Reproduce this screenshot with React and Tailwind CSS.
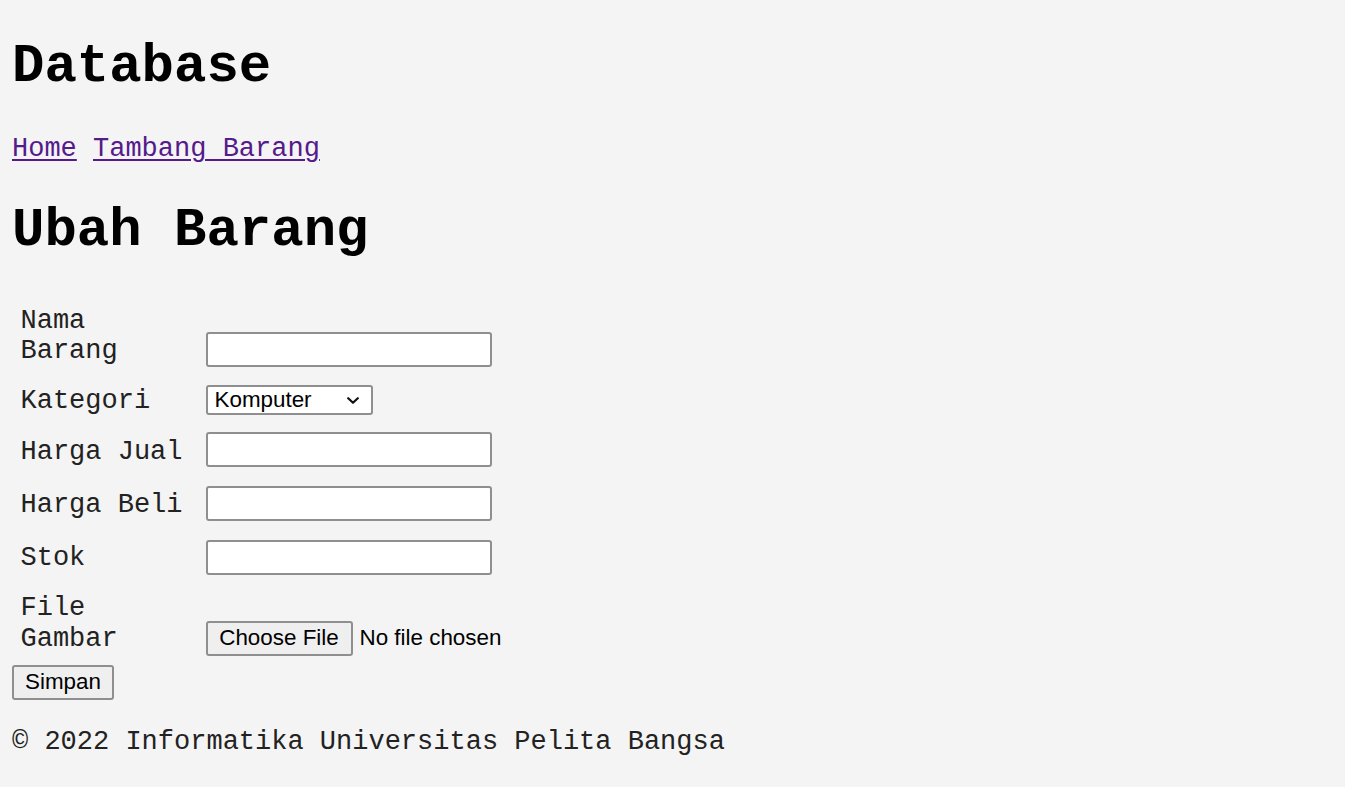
import { useState } from 'react';

// mt / pb are tuned so each row lands where the original page put it
const fields = [
  { name: 'nama', label: 'Nama Barang', type: 'text', row: 'mt-[44.8px]', pad: 'pb-0' },
  { name: 'kategori', label: 'Kategori', type: 'select', row: 'mt-[18.1px]', pad: '' },
  { name: 'harga_jual', label: 'Harga Jual', type: 'text', row: 'mt-[16.3px]', pad: 'pb-0' },
  { name: 'harga_beli', label: 'Harga Beli', type: 'text', row: 'mt-[18.8px]', pad: 'pb-[0.5px]' },
  { name: 'stok', label: 'Stok', type: 'text', row: 'mt-[18.3px]', pad: 'pb-[0.5px]' },
  { name: 'gambar', label: 'File Gambar', type: 'file', row: 'mt-[18.4px]', pad: 'pb-[1.8px]' },
];

function Field({ field, value, onChange }) {
  if (field.type === 'select') {
    return (
      <span className="relative block mb-[1.1px]">
        <select
          value={value}
          onChange={(e) => onChange(e.target.value)}
          className="appearance-none block w-[167px] h-[30px] pl-[7px] pr-[30px] border-2 border-[#8f8f8f] rounded-[3px] bg-white text-black font-['Liberation_Sans',Arial,sans-serif] text-[22.4px] leading-[26px]"
        >
          <option>Komputer</option>
          <option>Elektronik</option>
          <option>Hand Phone</option>
        </select>
        <svg className="pointer-events-none absolute right-[14px] top-[12px] w-[12px] h-[7px]" viewBox="0 0 12 7" fill="none">
          <path d="M1.2 1.2l4.8 4.6 4.8-4.6" stroke="#111" strokeWidth="2.2" strokeLinecap="round" strokeLinejoin="round" />
        </svg>
      </span>
    );
  }
  if (field.type === 'file') {
    return (
      <label className="flex items-center font-['Liberation_Sans',Arial,sans-serif] text-[22.4px] leading-[26px] text-black cursor-pointer">
        <span className="flex items-center justify-center h-[35px] w-[147px] border-2 border-[#8f8f8f] rounded-[3px] bg-[#efefef]">Choose File</span>
        <span className="ml-[7px]">No file chosen</span>
        <input type="file" className="hidden" />
      </label>
    );
  }
  return (
    <input
      type="text"
      value={value}
      onChange={(e) => onChange(e.target.value)}
      className="block w-[286px] h-[35px] px-[3px] border-2 border-[#8f8f8f] rounded-[3px] bg-white text-black font-['Liberation_Sans',Arial,sans-serif] text-[22.4px]"
    />
  );
}

export default function App() {
  const [form, setForm] = useState({ nama: '', kategori: 'Komputer', harga_jual: '', harga_beli: '', stok: '' });

  return (
    <div className="min-h-screen flex flex-col px-[12px] bg-[#f4f4f4] text-[#222] font-['Liberation_Mono','Courier_New',monospace] text-[27px] leading-[30.6px]">
      <h1 className="mt-[35.7px] text-[54px] leading-[61.2px] font-bold text-black">Database</h1>

      <nav className="mt-[37px]">
        <a href="#" className="text-[#551a8b] underline decoration-2 underline-offset-[3px]">Home</a>{' '}
        <a href="#" className="text-[#551a8b] underline decoration-2 underline-offset-[3px]">Tambang Barang</a>
      </nav>

      <h1 className="mt-[35.3px] text-[54px] leading-[61.2px] font-bold text-black">Ubah Barang</h1>

      <form className="flex flex-col" onSubmit={(e) => e.preventDefault()}>
        {fields.map((f) => (
          <div key={f.name} className={`flex items-end ${f.row}`}>
            <span className={`w-[193.5px] shrink-0 pl-[8.5px] pr-[14px] ${f.pad}`}>{f.label}</span>
            <Field field={f} value={form[f.name]} onChange={(v) => setForm({ ...form, [f.name]: v })} />
          </div>
        ))}
        <div className="mt-[9px]">
          <button type="submit" className="h-[35px] w-[102px] border-2 border-[#8f8f8f] rounded-[3px] bg-[#efefef] text-black font-['Liberation_Sans',Arial,sans-serif] text-[22.4px] leading-[26px]">Simpan</button>
        </div>
      </form>

      <footer className="mt-[27.5px]">© 2022 Informatika Universitas Pelita Bangsa</footer>
    </div>
  );
}
